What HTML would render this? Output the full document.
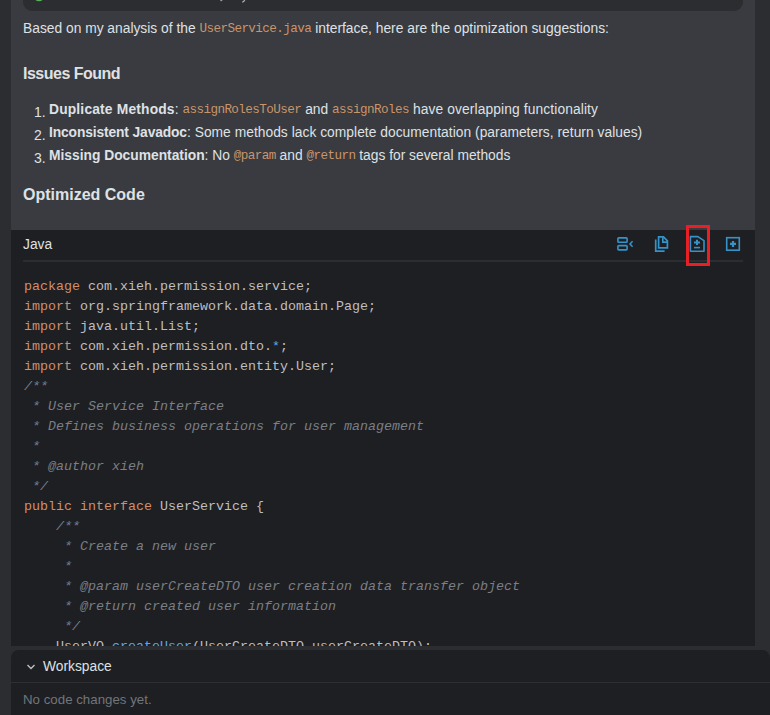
<!DOCTYPE html>
<html><head><meta charset="utf-8">
<style>
*{margin:0;padding:0;box-sizing:border-box}
html,body{width:770px;height:715px;overflow:hidden;background:#2b2d30}
body{position:relative;font-family:"Liberation Sans",sans-serif;color:#dfe1e5}
.abs{position:absolute;white-space:pre}
#panel{position:absolute;left:11px;top:0;width:744px;height:230px;background:#393b40}
#topbox{position:absolute;left:23px;top:-20px;width:720px;height:31px;background:#2b2d30;border-radius:9px}
.t{font-size:13.8px;line-height:18px}
.h{font-size:16px;font-weight:bold;line-height:20px}
code,.ic{font-family:"Liberation Mono",monospace;color:#c9956a;font-size:12.6px;letter-spacing:-0.56px;position:relative;top:-1px}
.b{font-weight:bold}
.mk{font-size:14px}
#code{position:absolute;left:11px;top:230px;width:744px;height:416px;background:#1e1f22;overflow:hidden}
#codehdr{position:absolute;left:12px;top:0;width:720px;height:32px;border-bottom:2px solid #2b2d30}
pre{position:absolute;left:13px;top:47px;font-family:"Liberation Mono",monospace;font-size:13.33px;line-height:20px;color:#bcbec4}
.k{color:#cf8e6d}
.c{color:#7a7e85;font-style:italic}
.f{color:#56a8f5}
#ws{position:absolute;left:11px;top:650px;width:759px;height:80px;background:#1e1f22;border-radius:8px 8px 0 0}
#wsdiv{position:absolute;left:0;top:32px;width:100%;height:1px;background:#2d2f32}
</style></head><body>
<div id="panel"></div>
<div id="topbox"></div>
<div class="abs t" style="left:23px;top:20px">Based on my analysis of the <span class="ic">UserService.java</span> interface, here are the optimization suggestions:</div>
<div class="abs h" style="left:23px;top:64px;letter-spacing:-0.5px">Issues Found</div>
<div class="abs t mk" style="left:34px;top:103px">1.</div>
<div class="abs t" style="left:49px;top:101px"><span class="b" style="letter-spacing:0.18px">Duplicate Methods</span>: <span class="ic">assignRolesToUser</span> and <span class="ic">assignRoles</span><span style="letter-spacing:0.11px"> have overlapping functionality</span></div>
<div class="abs t mk" style="left:34px;top:126px">2.</div>
<div class="abs t" style="left:49px;top:124px"><span class="b" style="letter-spacing:-0.12px">Inconsistent Javadoc</span><span style="letter-spacing:0.03px">: Some methods lack complete documentation (parameters, return values)</span></div>
<div class="abs t mk" style="left:34px;top:149px">3.</div>
<div class="abs t" style="left:49px;top:147px"><span class="b">Missing Documentation</span>: No <span class="ic">@param</span> and <span class="ic">@return</span> tags for several methods</div>
<div class="abs h" style="left:23px;top:185px">Optimized Code</div>
<div id="code">
  <div id="codehdr"></div>
  <div class="abs t" style="left:12px;top:6px">Java</div>
<pre><span class="k">package</span> com.xieh.permission.service;
<span class="k">import</span> org.springframework.data.domain.Page;
<span class="k">import</span> java.util.List;
<span class="k">import</span> com.xieh.permission.dto.<span class="f">*</span>;
<span class="k">import</span> com.xieh.permission.entity.User;
<span class="c">/**
 * User Service Interface
 * Defines business operations for user management
 *
 * @author xieh
 */</span>
<span class="k">public interface</span> UserService {
    <span class="c">/**
     * Create a new user
     *
     * @param userCreateDTO user creation data transfer object
     * @return created user information
     */</span>
    UserVO <span class="f">createUser</span>(UserCreateDTO userCreateDTO);
}</pre>
</div>
<svg id="icons" width="770" height="715" viewBox="0 0 770 715" style="position:absolute;left:0;top:0" fill="none" stroke="#3593c9">
<rect x="617.9" y="237.9" width="9.2" height="4.3" rx="0.8" stroke-width="1.6"/>
<rect x="617.9" y="245.6" width="9.2" height="4.3" rx="0.8" stroke-width="1.6"/>
<polyline points="632.6,241.3 630,244 632.6,246.7" stroke-width="1.6"/>
<path d="M655.7,239.5 V251.2 H664.6" stroke-width="1.7"/>
<path d="M658.6,236.9 H663.5 L667.4,240.8 V247.9 H658.6 Z" stroke-width="1.7"/>
<path d="M662.8,237.3 V242.2 H667" stroke-width="1.7"/>
<path d="M690.4,236.6 H697.8 L704,240.6 V251.2 H690.4 Z" stroke-width="1.6" stroke-linejoin="round"/>
<path d="M694,242.5 H700 M697,239.8 V245" stroke-width="2"/>
<path d="M694,247.6 H700" stroke-width="1.6"/>
<rect x="726.7" y="237.7" width="12.6" height="12.5" stroke-width="1.6"/>
<path d="M730,243.9 H736 M733,240.9 V246.9" stroke-width="2.2"/>
<rect x="687.5" y="226.5" width="21" height="38" stroke="#e81f25" stroke-width="3"/>
</svg>
<svg style="position:absolute;left:0;top:0" width="260" height="10" fill="none"><path d="M220.5,-1 L221.8,0.8" stroke="#9da0a5" stroke-width="2"/><path d="M245.3,-2 Q244.5,2 242.2,2.2" stroke="#a9acb1" stroke-width="1.3"/></svg>
<svg id="green" style="position:absolute;left:0;top:0" width="60" height="12"><circle cx="39" cy="-4.2" r="5.5" fill="#57b05a"/></svg>
<div id="ws">
  <div id="wsdiv"></div>
  <div class="abs t" style="left:32px;top:8px">Workspace</div>
  <svg style="position:absolute;left:0;top:0" width="60" height="40" viewBox="0 0 60 40" fill="none"><polyline points="16.5,15 20,18.5 23.5,15" stroke="#bfc1c5" stroke-width="1.35"/></svg>
  <div class="abs t" style="left:12px;top:41px;color:#71757c;font-size:13.3px">No code changes yet.</div>
</div>
</body></html>
